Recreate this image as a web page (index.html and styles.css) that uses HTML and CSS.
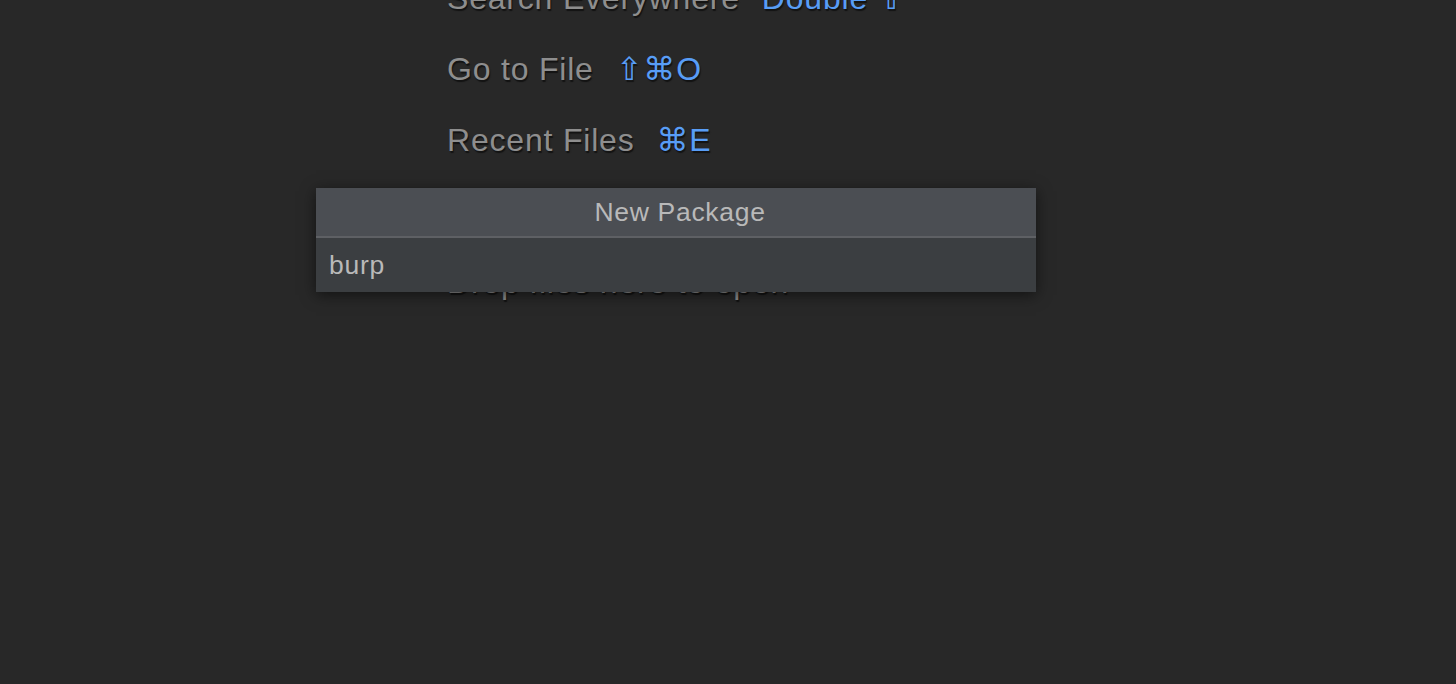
FILE: index.html
```html
<!DOCTYPE html>
<html>
<head>
<meta charset="utf-8">
<link rel="stylesheet" href="styles.css">
</head>
<body>
<div class="editor">
  <ul class="hints">
    <li class="hint"><span class="label">Search Everywhere</span><span class="keys">Double ⇧</span></li>
    <li class="hint"><span class="label">Go to File</span><span class="keys">⇧⌘O</span></li>
    <li class="hint"><span class="label">Recent Files</span><span class="keys">⌘E</span></li>
    <li class="hint"><span class="label">Navigation Bar</span><span class="keys">⌘↑</span></li>
    <li class="hint"><span class="label">Drop files here to open</span></li>
  </ul>
  <div class="popup">
    <div class="popup-title">New Package</div>
    <div class="popup-input">burp</div>
  </div>
</div>
</body>
</html>
```
FILE: styles.css
```css
html, body {
  margin: 0;
  padding: 0;
  height: 100%;
  background: #282828;
  overflow: hidden;
}
.editor {
  position: relative;
  display: flow-root;
  height: 684px;
  font-family: "Liberation Sans", "DejaVu Sans", sans-serif;
}
.hints {
  list-style: none;
  margin: -37px 0 0 0;
  padding: 0 0 0 447px;
  display: flex;
  flex-direction: column;
}
.hint {
  display: flex;
  gap: 22px;
  font-size: 32px;
  line-height: 71px;
  letter-spacing: 0.8px;
  white-space: nowrap;
  text-shadow: 1px 2px 1px rgba(0, 0, 0, 0.55);
}
.label {
  color: #8e8e8e;
}
.keys {
  color: #589df6;
}
.popup {
  position: absolute;
  left: 316px;
  top: 188px;
  width: 720px;
  box-shadow: 0 3px 14px rgba(0, 0, 0, 0.55);
  font-size: 26.5px;
  letter-spacing: 0.7px;
  color: #b9b9b9;
}
.popup-title {
  height: 48px;
  line-height: 48px;
  text-align: center;
  background: #4b4e53;
  border-bottom: 2px solid #5e6064;
  padding-left: 8px;
}
.popup-input {
  height: 54px;
  line-height: 54px;
  background: #3b3e41;
  padding-left: 13px;
}
```
